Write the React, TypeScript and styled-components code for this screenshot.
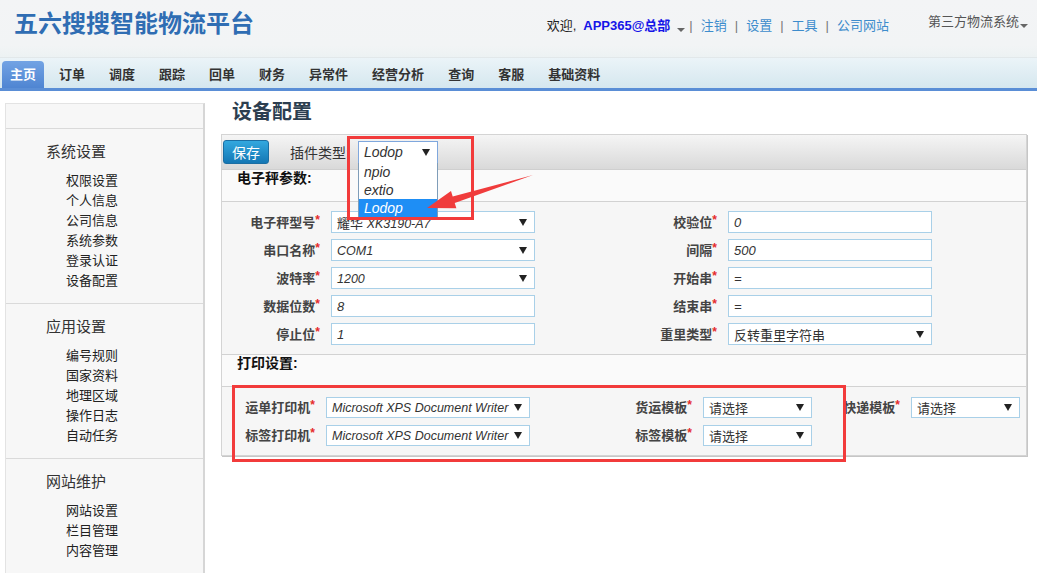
import React from "react";
import styled, { createGlobalStyle, css } from "styled-components";

const GlobalStyle = createGlobalStyle`
  html, body {
    margin: 0;
    padding: 0;
    overflow: hidden;
    background: #fff;
  }
  body {
    font-family: "Liberation Sans", "Noto Sans CJK SC", sans-serif;
    font-size: 13px;
    color: #333;
  }
`;

const Page = styled.div`
  width: 1037px;
`;

/* ---------- header ---------- */

const Header = styled.header`
  display: flex;
  align-items: flex-start;
  height: 57px;
  padding: 0 9px 0 14px;
  background: linear-gradient(#f3f4f6, #f2f4f5 80%, #ecf2f3);
`;

const Logo = styled.h1`
  margin: 10px 0 0;
  font-family: "Noto Sans CJK SC", sans-serif;
  font-size: 24px;
  line-height: 24px;
  font-weight: 700;
  color: #2f6db3;
`;

const UserBar = styled.div`
  display: flex;
  align-items: center;
  margin: 18px 0 0 auto;
  line-height: 16px;
  color: #222;
`;

const UserName = styled.a`
  margin-left: 7px;
  font-weight: 700;
  color: #1515e8;
  text-decoration: none;
`;

const Caret = styled.span<{ $gap?: number }>`
  width: 0;
  height: 0;
  margin: 8px 0 0 ${(p) => p.$gap ?? 7}px;
  border-left: 4px solid transparent;
  border-right: 4px solid transparent;
  border-top: 4px solid #666;
`;

const Sep = styled.em`
  margin: 0 8px;
  font-style: normal;
  color: #777;

  ${Caret} + & {
    margin-left: 4px;
  }
`;

const TopLink = styled.a`
  color: #3d8ccc;
  text-decoration: none;
`;

const SystemSwitch = styled.div`
  display: flex;
  align-items: center;
  margin: 14px 0 0 39px;
  line-height: 16px;
  color: #555;
`;

/* ---------- nav ---------- */

const Nav = styled.nav`
  display: flex;
  align-items: flex-end;
  height: 30px;
  padding-left: 2px;
  background: linear-gradient(#ebf4f8, #d5e7ef);
  border-top: 1px solid #e2e8ea;
  border-bottom: 3px solid #5a8ed6;
`;

const NavItem = styled.a<{ $active?: boolean }>`
  height: 27px;
  line-height: 27px;
  padding: 0 12px;
  font-weight: 700;
  font-size: 13px;
  color: #333;
  text-decoration: none;

  ${(p) =>
    p.$active &&
    css`
      padding: 0 8px;
      margin-right: 3px;
      color: #fff;
      background: linear-gradient(#72a3e4, #4f85d2);
      border-radius: 4px 4px 0 0;
    `}
`;

/* ---------- body ---------- */

const Body = styled.div`
  display: flex;
  align-items: flex-start;
  gap: 16px;
  padding: 12px 10px 0 5px;
`;

const Sidebar = styled.aside`
  width: 200px;
  box-sizing: border-box;
  flex-shrink: 0;
  background: #f7f7f7;
  border: 1px solid #e3e3e3;
  border-right: 2px solid #d6d6d6;
`;

const SideTop = styled.div`
  height: 24px;
`;

const SideSection = styled.div`
  border-top: 1px solid #dadada;
  padding: 11px 0 12px;
`;

const SideTitle = styled.div`
  padding-left: 40px;
  font-size: 15px;
  line-height: 24px;
  color: #333;
`;

const SideList = styled.ul`
  margin: 7px 0 0;
  padding: 0 0 0 60px;
  list-style: none;
`;

const SideItem = styled.li`
  line-height: 20px;
  font-size: 13px;
  color: #222;
`;

const Main = styled.main`
  flex: 1;
  min-width: 0;
`;

const PageTitle = styled.h2`
  margin: -2px 0 0 11px;
  font-size: 20px;
  line-height: 22px;
  font-weight: 700;
  color: #2c3e50;
`;

const Panel = styled.section`
  position: relative;
  margin-top: 11px;
  border: 1px solid #d4d4d4;
  box-shadow: 1px 1px 0 #c6c6c6;
  background: #f6f6f6;
`;

const Toolbar = styled.div`
  display: flex;
  align-items: center;
  height: 34px;
  padding-left: 1px;
  background: linear-gradient(#f5f5f5, #d9d9d9);
  border-bottom: 1px solid #cfcfcf;
`;

const SaveButton = styled.button`
  width: 46px;
  height: 24px;
  padding: 0;
  border: 1px solid #1b6ea3;
  border-radius: 3px;
  background: linear-gradient(#33a8df, #1477b4);
  color: #fff;
  font-family: inherit;
  font-size: 14px;
`;

const ToolLabel = styled.span`
  margin-left: 21px;
  font-size: 14px;
  color: #333;
`;

const PluginSelect = styled.div`
  position: relative;
  display: flex;
  align-items: center;
  width: 80px;
  height: 23px;
  box-sizing: border-box;
  margin-left: 8px;
  padding: 0 7px 0 5px;
  border: 1px solid #7fa7dd;
  background: #fff;
  font-size: 14px;
  font-style: italic;
  color: #333;
`;

const OptionList = styled.ul`
  position: absolute;
  z-index: 2;
  top: 100%;
  left: -1px;
  width: 80px;
  box-sizing: border-box;
  margin: 0;
  padding: 0;
  list-style: none;
  background: #fff;
  border: 1px solid #7f9db9;
  border-top: none;
`;

const Option = styled.li<{ $selected?: boolean }>`
  height: 18px;
  line-height: 18px;
  padding-left: 5px;
  color: ${(p) => (p.$selected ? "#fff" : "#333")};
  background: ${(p) => (p.$selected ? "#1e8ef5" : "transparent")};
`;

const SectionHead = styled.div<{ $divided?: boolean }>`
  height: 31px;
  padding: 0 15px;
  line-height: 17px;
  font-size: 14px;
  font-weight: 700;
  color: #111;
  background: #fafafa;
  border-bottom: 1px solid #d2d2d2;
  ${(p) =>
    p.$divided &&
    css`
      border-top: 1px solid #d2d2d2;
    `}
`;

const FormGrid = styled.div<{ $cols: string }>`
  display: grid;
  grid-template-columns: ${(p) => p.$cols};
  grid-auto-rows: 22px;
  row-gap: 6px;
  align-items: center;
  padding: 9px 0 9px;
`;

const Label = styled.label`
  padding-right: 11px;
  margin-top: -2px;
  text-align: right;
  font-size: 13px;
  font-weight: 700;
  color: #444;
  white-space: nowrap;
`;

const Star = styled.span`
  color: #e52b2b;
  font-size: 12px;
  vertical-align: 3px;
`;

const TextInput = styled.input`
  width: 100%;
  height: 22px;
  box-sizing: border-box;
  margin: 0;
  padding: 0 5px;
  border: 1px solid #a9d0e8;
  background: #fff;
  font-family: "Liberation Sans", sans-serif;
  font-size: 13px;
  font-style: italic;
  color: #333;
  outline: none;
`;

const SelectBox = styled.div<{ $short?: boolean }>`
  display: flex;
  align-items: center;
  height: ${(p) => (p.$short ? 21 : 22)}px;
  box-sizing: border-box;
  padding: 0 7px 0 5px;
  border: 1px solid #a9d0e8;
  background: #fff;
  font-size: 13px;
  color: #333;
  white-space: nowrap;
  overflow: hidden;
`;

const Latin = styled.span`
  font-style: italic;
  font-size: 12.5px;
`;

const DownArrow = styled.span`
  flex-shrink: 0;
  width: 0;
  height: 0;
  margin-left: auto;
  border-left: 4px solid transparent;
  border-right: 4px solid transparent;
  border-top: 7px solid #222;
`;

const Callout = styled.div<{ $x: number; $y: number; $w: number; $h: number }>`
  position: absolute;
  z-index: 3;
  left: ${(p) => p.$x}px;
  top: ${(p) => p.$y}px;
  width: ${(p) => p.$w}px;
  height: ${(p) => p.$h}px;
  box-sizing: border-box;
  border: 3px solid #f23b3b;
  pointer-events: none;
`;

const ArrowLayer = styled.svg`
  position: absolute;
  z-index: 3;
  left: 0;
  top: 0;
  overflow: visible;
  pointer-events: none;
`;

type Control = { label: string; input?: string; select?: React.ReactNode };

const menu = [
  { title: "系统设置", items: ["权限设置", "个人信息", "公司信息", "系统参数", "登录认证", "设备配置"] },
  { title: "应用设置", items: ["编号规则", "国家资料", "地理区域", "操作日志", "自动任务"] },
  { title: "网站维护", items: ["网站设置", "栏目管理", "内容管理"] },
];

const navItems = ["订单", "调度", "跟踪", "回单", "财务", "异常件", "经营分析", "查询", "客服", "基础资料"];

const scaleRows: Control[][] = [
  [
    { label: "电子秤型号", select: <>耀华 <Latin>XK3190-A7</Latin></> },
    { label: "校验位", input: "0" },
  ],
  [
    { label: "串口名称", select: <Latin>COM1</Latin> },
    { label: "间隔", input: "500" },
  ],
  [
    { label: "波特率", select: <Latin>1200</Latin> },
    { label: "开始串", input: "=" },
  ],
  [
    { label: "数据位数", input: "8" },
    { label: "结束串", input: "=" },
  ],
  [
    { label: "停止位", input: "1" },
    { label: "重里类型", select: "反转重里字符串" },
  ],
];

const printer = <Latin>Microsoft XPS Document Writer</Latin>;

const printRows: Control[][] = [
  [
    { label: "运单打印机", select: printer },
    { label: "货运模板", select: "请选择" },
    { label: "快递模板", select: "请选择" },
  ],
  [
    { label: "标签打印机", select: printer },
    { label: "标签模板", select: "请选择" },
  ],
];

function Field({ c, short }: { c: Control; short?: boolean }) {
  return (
    <>
      <Label>
        {c.label}
        <Star>*</Star>
      </Label>
      {c.input !== undefined ? (
        <TextInput readOnly value={c.input} />
      ) : (
        <SelectBox $short={short}>
          <span>{c.select}</span>
          <DownArrow />
        </SelectBox>
      )}
    </>
  );
}

export default function App() {
  return (
    <Page>
      <GlobalStyle />
      <Header>
        <Logo>五六搜搜智能物流平台</Logo>
        <UserBar>
          欢迎,
          <UserName>APP365@总部</UserName>
          <Caret />
          <Sep>|</Sep>
          <TopLink>注销</TopLink>
          <Sep>|</Sep>
          <TopLink>设置</TopLink>
          <Sep>|</Sep>
          <TopLink>工具</TopLink>
          <Sep>|</Sep>
          <TopLink>公司网站</TopLink>
        </UserBar>
        <SystemSwitch>
          第三方物流系统
          <Caret $gap={1} />
        </SystemSwitch>
      </Header>

      <Nav>
        <NavItem $active>主页</NavItem>
        {navItems.map((n) => (
          <NavItem key={n}>{n}</NavItem>
        ))}
      </Nav>

      <Body>
        <Sidebar>
          <SideTop />
          {menu.map((s) => (
            <SideSection key={s.title}>
              <SideTitle>{s.title}</SideTitle>
              <SideList>
                {s.items.map((i) => (
                  <SideItem key={i}>{i}</SideItem>
                ))}
              </SideList>
            </SideSection>
          ))}
        </Sidebar>

        <Main>
          <PageTitle>设备配置</PageTitle>
          <Panel>
            <Toolbar>
              <SaveButton>保存</SaveButton>
              <ToolLabel>插件类型:</ToolLabel>
              <PluginSelect>
                Lodop
                <DownArrow />
                <OptionList>
                  <Option>npio</Option>
                  <Option>extio</Option>
                  <Option $selected>Lodop</Option>
                </OptionList>
              </PluginSelect>
            </Toolbar>

            <SectionHead>电子秤参数:</SectionHead>
            <FormGrid $cols="109px 204px 193px 204px">
              {scaleRows.map((row) =>
                row.map((c) => <Field key={c.label} c={c} />)
              )}
            </FormGrid>

            <SectionHead $divided>打印设置:</SectionHead>
            <FormGrid $cols="104px 204px 173px 109px 99px 109px">
              {printRows.map((row) =>
                row.map((c) => <Field key={c.label} c={c} short />)
              )}
            </FormGrid>

            <Callout $x={125} $y={1} $w={127} $h={84} />
            <Callout $x={10} $y={250} $w={614} $h={77} />
            <ArrowLayer width="806" height="330">
              <polygon
                points="311,40 230.7,61.4 229,56.1 205,73 234.4,73.3 232.7,68"
                fill="#f03c3c"
              />
            </ArrowLayer>
          </Panel>
        </Main>
      </Body>
    </Page>
  );
}
